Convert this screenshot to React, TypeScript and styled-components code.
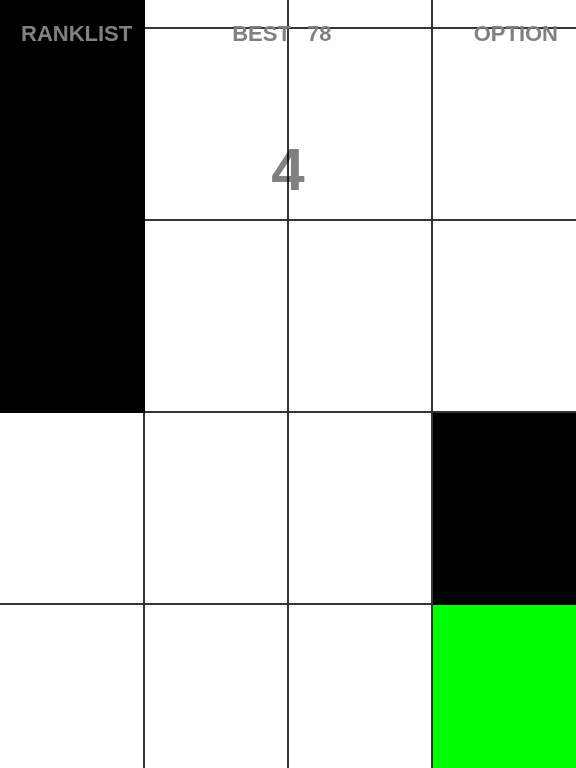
import styled, { createGlobalStyle } from "styled-components"

const GlobalStyle = createGlobalStyle`
    html, body {
        margin: 0;
        padding: 0;
        background: #fff;
        overflow: hidden;
    }
`

type TileKind = "white" | "black" | "hit"

// top row is only partly on screen
const rows: TileKind[][] = [
    ["black", "white", "white", "white"],
    ["black", "white", "white", "white"],
    ["black", "white", "white", "white"],
    ["white", "white", "white", "black"],
    ["white", "white", "white", "hit"],
]

const tileColor = {
    white: "#ffffff",
    black: "#000000",
    hit: "#00ff00",
}

const Screen = styled.div`
    position: relative;
    width: 576px;
    height: 768px;
    overflow: hidden;
    font-family: "Liberation Sans", Arial, sans-serif;
`

const Board = styled.div`
    display: grid;
    grid-template-columns: 145px 144px 144px 143px;
    grid-auto-rows: 192px;
    margin-top: -163px;
`

const Tile = styled.div<{ $kind: TileKind }>`
    box-sizing: border-box;
    background: ${props => tileColor[props.$kind]};
    border-right: 2px solid ${props => props.$kind === "black" ? "#000" : "#333"};
    border-bottom: 2px solid ${props => props.$kind === "black" ? "#000" : "#333"};
    &:nth-child(4n) {
        border-right: none;
    }
`

const TopBar = styled.div`
    position: absolute;
    top: 0;
    left: 0;
    right: 0;
    display: flex;
    padding: 23px 18px 0 21px;
    font-size: 22px;
    line-height: 22px;
    font-weight: bold;
    color: #808080;
`

const Best = styled.div`
    display: flex;
    gap: 16px;
    margin-left: 100px;
`

const Option = styled.div`
    margin-left: auto;
`

const Score = styled.div`
    position: absolute;
    top: 140px;
    left: 0;
    right: 0;
    text-align: center;
    font-size: 60px;
    line-height: 60px;
    font-weight: bold;
    color: #808080;
    mix-blend-mode: multiply;
`

export default function App() {
    return (
        <Screen>
            <GlobalStyle />
            <Board>
                {rows.map((row, r) =>
                    row.map((kind, c) => <Tile key={`${r}-${c}`} $kind={kind} />)
                )}
            </Board>
            <Score>4</Score>
            <TopBar>
                <div>RANKLIST</div>
                <Best>
                    <span>BEST</span>
                    <span>78</span>
                </Best>
                <Option>OPTION</Option>
            </TopBar>
        </Screen>
    )
}
